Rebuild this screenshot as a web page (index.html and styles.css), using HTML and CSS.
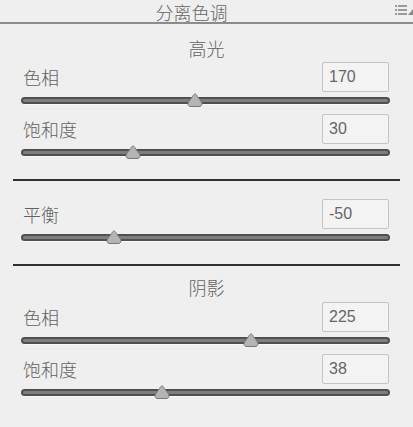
FILE: index.html
```html
<!DOCTYPE html>
<html lang="zh-CN">
<head>
<meta charset="utf-8">
<title>分离色调</title>
<link rel="stylesheet" href="styles.css">
</head>
<body>
<div class="panel">
  <div class="header">
    <span class="title">分离色调</span>
    <svg class="menu" width="18" height="10" viewBox="0 0 18 10">
      <rect x="0" y="0" width="2" height="2" fill="#9a9a9a"/>
      <rect x="3" y="0" width="9" height="2" fill="#9a9a9a"/>
      <rect x="0" y="4" width="2" height="2" fill="#9a9a9a"/>
      <rect x="3" y="4" width="9" height="2" fill="#9a9a9a"/>
      <rect x="0" y="8" width="2" height="2" fill="#9a9a9a"/>
      <rect x="3" y="8" width="9" height="2" fill="#9a9a9a"/>
      <path d="M13 10 L18 4 L18 10 Z" fill="#8a8a8a"/>
    </svg>
  </div>

  <div class="section-title first">高光</div>
  <div class="row"><span class="label">色相</span><span class="field">170</span></div>
  <div class="slider"><div class="track"><span class="thumb" style="left:47.2%"></span></div></div>
  <div class="row"><span class="label">饱和度</span><span class="field">30</span></div>
  <div class="slider"><div class="track"><span class="thumb" style="left:30%"></span></div></div>

  <div class="sep"></div>

  <div class="row balance"><span class="label">平衡</span><span class="field">-50</span></div>
  <div class="slider"><div class="track"><span class="thumb" style="left:25%"></span></div></div>

  <div class="sep"></div>

  <div class="section-title">阴影</div>
  <div class="row"><span class="label">色相</span><span class="field">225</span></div>
  <div class="slider"><div class="track"><span class="thumb" style="left:62.5%"></span></div></div>
  <div class="row"><span class="label">饱和度</span><span class="field">38</span></div>
  <div class="slider"><div class="track"><span class="thumb" style="left:38%"></span></div></div>
</div>
</body>
</html>
```
FILE: styles.css
```css
html, body {
  margin: 0;
  padding: 0;
  background: #efefef;
}
body {
  width: 413px;
  height: 427px;
  overflow: hidden;
  font-family: "Noto Sans CJK SC", "Noto Sans", sans-serif;
  font-weight: 300;
  color: #626262;
}
.panel {
  display: flex;
  flex-direction: column;
}
.header {
  position: relative;
  height: 22px;
  border-bottom: 2px solid #8c8c8c;
  display: flex;
  justify-content: center;
}
.title {
  font-size: 18px;
  line-height: 22px;
  margin-right: 30px;
  margin-top: 1px;
  color: #666666;
}
.menu {
  position: absolute;
  right: 0;
  top: 5px;
}
.section-title {
  text-align: center;
  font-size: 18px;
  line-height: 22px;
  padding-top: 10px;
  padding-bottom: 4px;
}
.section-title.first {
  padding-top: 13px;
  padding-bottom: 3px;
}
.row {
  height: 30px;
  display: flex;
  align-items: center;
  justify-content: space-between;
  padding: 0 24px 0 23px;
}
.row.balance {
  margin-top: 18px;
}
.label {
  font-size: 18px;
  line-height: 22px;
}
.field {
  box-sizing: border-box;
  width: 67px;
  height: 30px;
  border: 1.5px solid #c4c4c4;
  border-radius: 2px;
  background: #f3f3f3;
  font-family: "Liberation Sans", Arial, sans-serif;
  font-weight: 400;
  font-size: 16px;
  line-height: 27px;
  padding-left: 6px;
  color: #666666;
}
.slider {
  height: 22px;
  padding: 5px 23px 0 21px;
  box-sizing: border-box;
}
.track {
  position: relative;
  box-sizing: border-box;
  height: 7px;
  border: 2px solid #505050;
  border-radius: 4px;
  background: #7e7e7e;
  box-shadow: 0 1px 0 #fafafa;
}
.thumb {
  position: absolute;
  top: -6px;
  width: 16px;
  height: 14px;
  margin-left: -8px;
  background: no-repeat center / 16px 14px url("data:image/svg+xml;utf8,<svg xmlns='http://www.w3.org/2000/svg' width='16' height='14' viewBox='0 0 16 14'><path d='M8 1 C9 1 9.5 2 10.5 3.5 L14.5 9 C15.5 11 15 13.5 12 13.5 L4 13.5 C1 13.5 0.5 11 1.5 9 L5.5 3.5 C6.5 2 7 1 8 1 Z' fill='%23b4b4b4' stroke='%23777' stroke-width='1'/></svg>");
}
.sep {
  height: 2px;
  background: #303030;
  margin: 13px 13px 0 13px;
}
```
